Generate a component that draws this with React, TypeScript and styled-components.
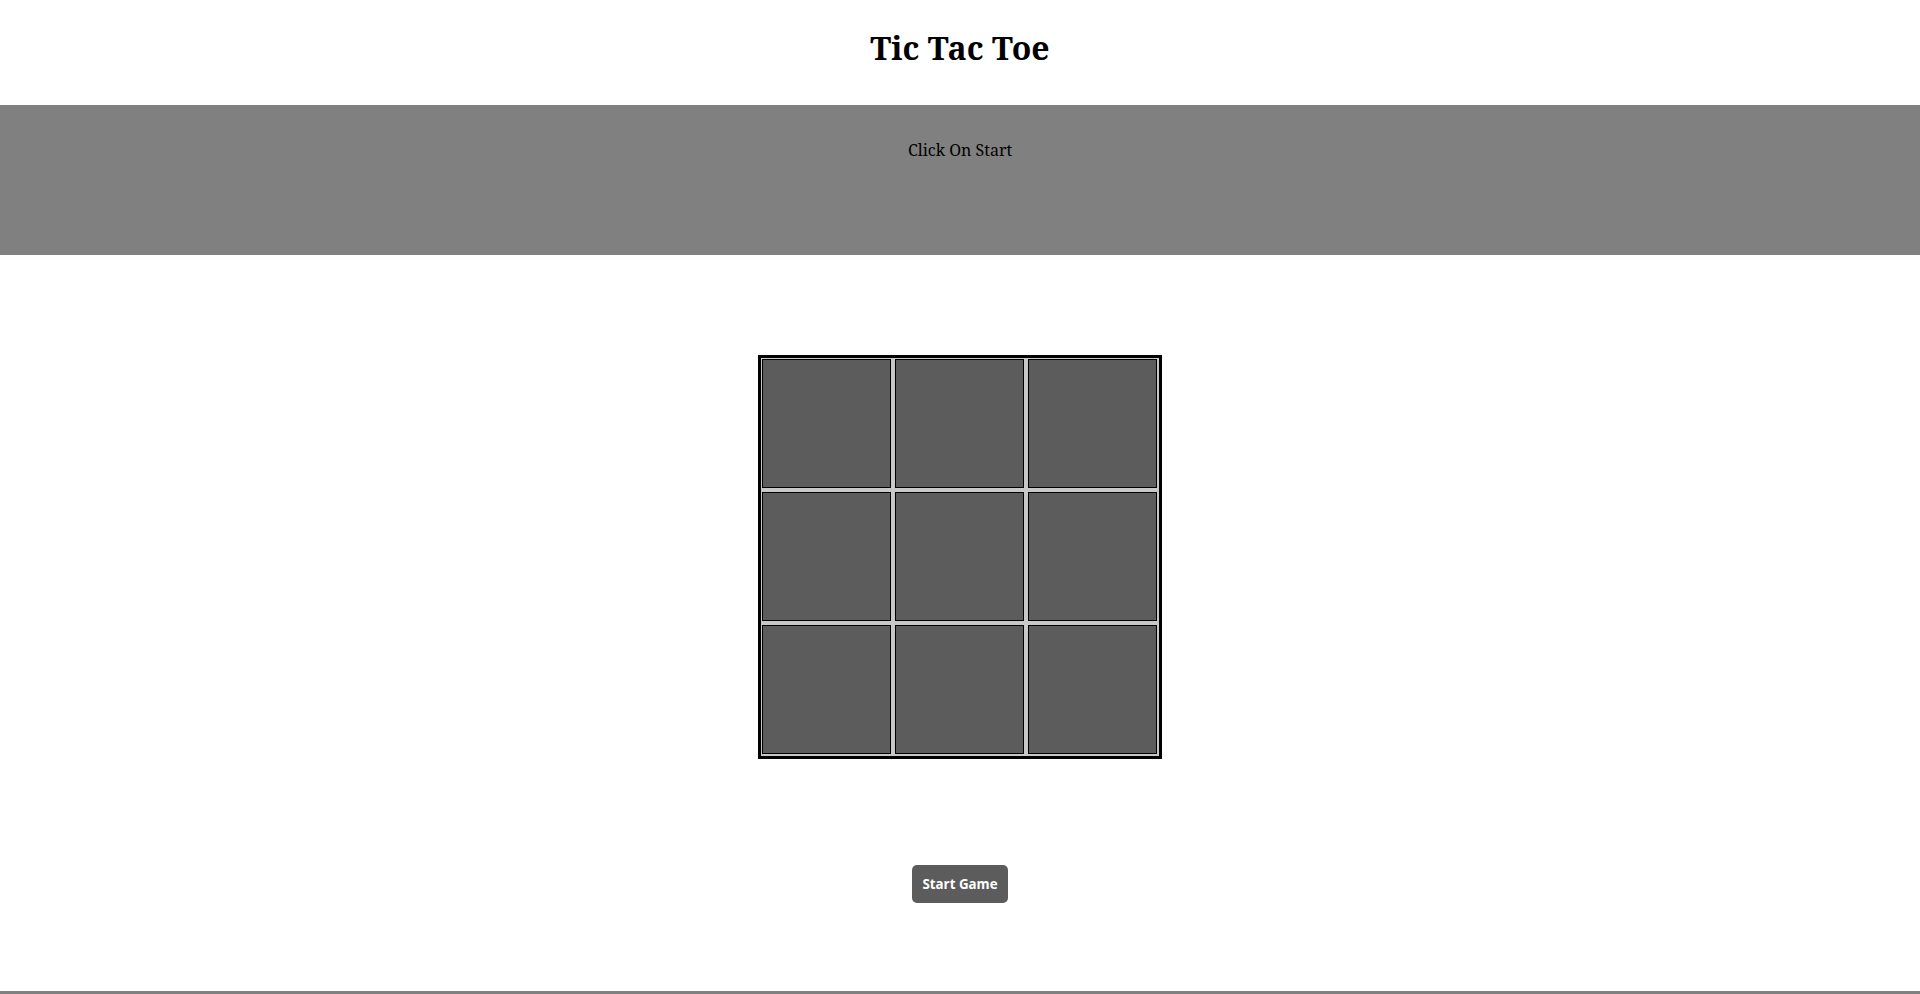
import React from "react";
import styled, { createGlobalStyle } from "styled-components";

const GlobalStyle = createGlobalStyle`
  html, body { margin: 0; padding: 0; background: #ffffff; }
  body { font-family: "Noto Serif", "DejaVu Serif", serif; color: #000; }
`;

const Page = styled.div`
  min-height: 994px;
  display: flex;
  flex-direction: column;
`;

const Header = styled.header`
  height: 105px;
  box-sizing: border-box;
  padding-top: 26px;
  text-align: center;
`;

const Title = styled.h1`
  margin: 0;
  font-family: "Noto Serif", serif;
  font-size: 32px;
  font-weight: 700;
`;

const StatusBar = styled.section`
  height: 150px;
  box-sizing: border-box;
  padding-top: 34px;
  background: #808080;
  text-align: center;
`;

const StatusText = styled.p`
  margin: 0;
  font-family: "Noto Serif", serif;
  font-size: 16px;
  color: #000;
`;

const Main = styled.main`
  flex: 1;
  display: flex;
  flex-direction: column;
  align-items: center;
  padding-top: 100px;
`;

const Board = styled.div`
  display: grid;
  grid-template-columns: repeat(3, 129px);
  grid-auto-rows: 129px;
  gap: 4px;
  padding: 1px 2px 2px 1px;
  border: 3px solid #000;
  background: #c8c8c8;
`;

const Cell = styled.div`
  box-sizing: border-box;
  border: 1px solid #000;
  background: #5c5c5c;
`;

const StartButton = styled.button`
  margin-top: 106px;
  width: 96px;
  height: 38px;
  border: none;
  border-radius: 5px;
  background: #5c5c5c;
  color: #ffffff;
  font-family: "Open Sans", "Noto Sans", sans-serif;
  font-size: 13.333px;
  font-weight: 700;
  cursor: pointer;
  padding: 0;
`;

const Footer = styled.footer`
  margin-top: auto;
  height: 3px;
  background: #808080;
`;

export default function App() {
  const cells = Array.from({ length: 9 }, (_, i) => i);
  return (
    <Page>
      <GlobalStyle />
      <Header>
        <Title>Tic Tac Toe</Title>
      </Header>
      <StatusBar>
        <StatusText>Click On Start</StatusText>
      </StatusBar>
      <Main>
        <Board>
          {cells.map((i) => (
            <Cell key={i} />
          ))}
        </Board>
        <StartButton>Start Game</StartButton>
      </Main>
      <Footer />
    </Page>
  );
}
